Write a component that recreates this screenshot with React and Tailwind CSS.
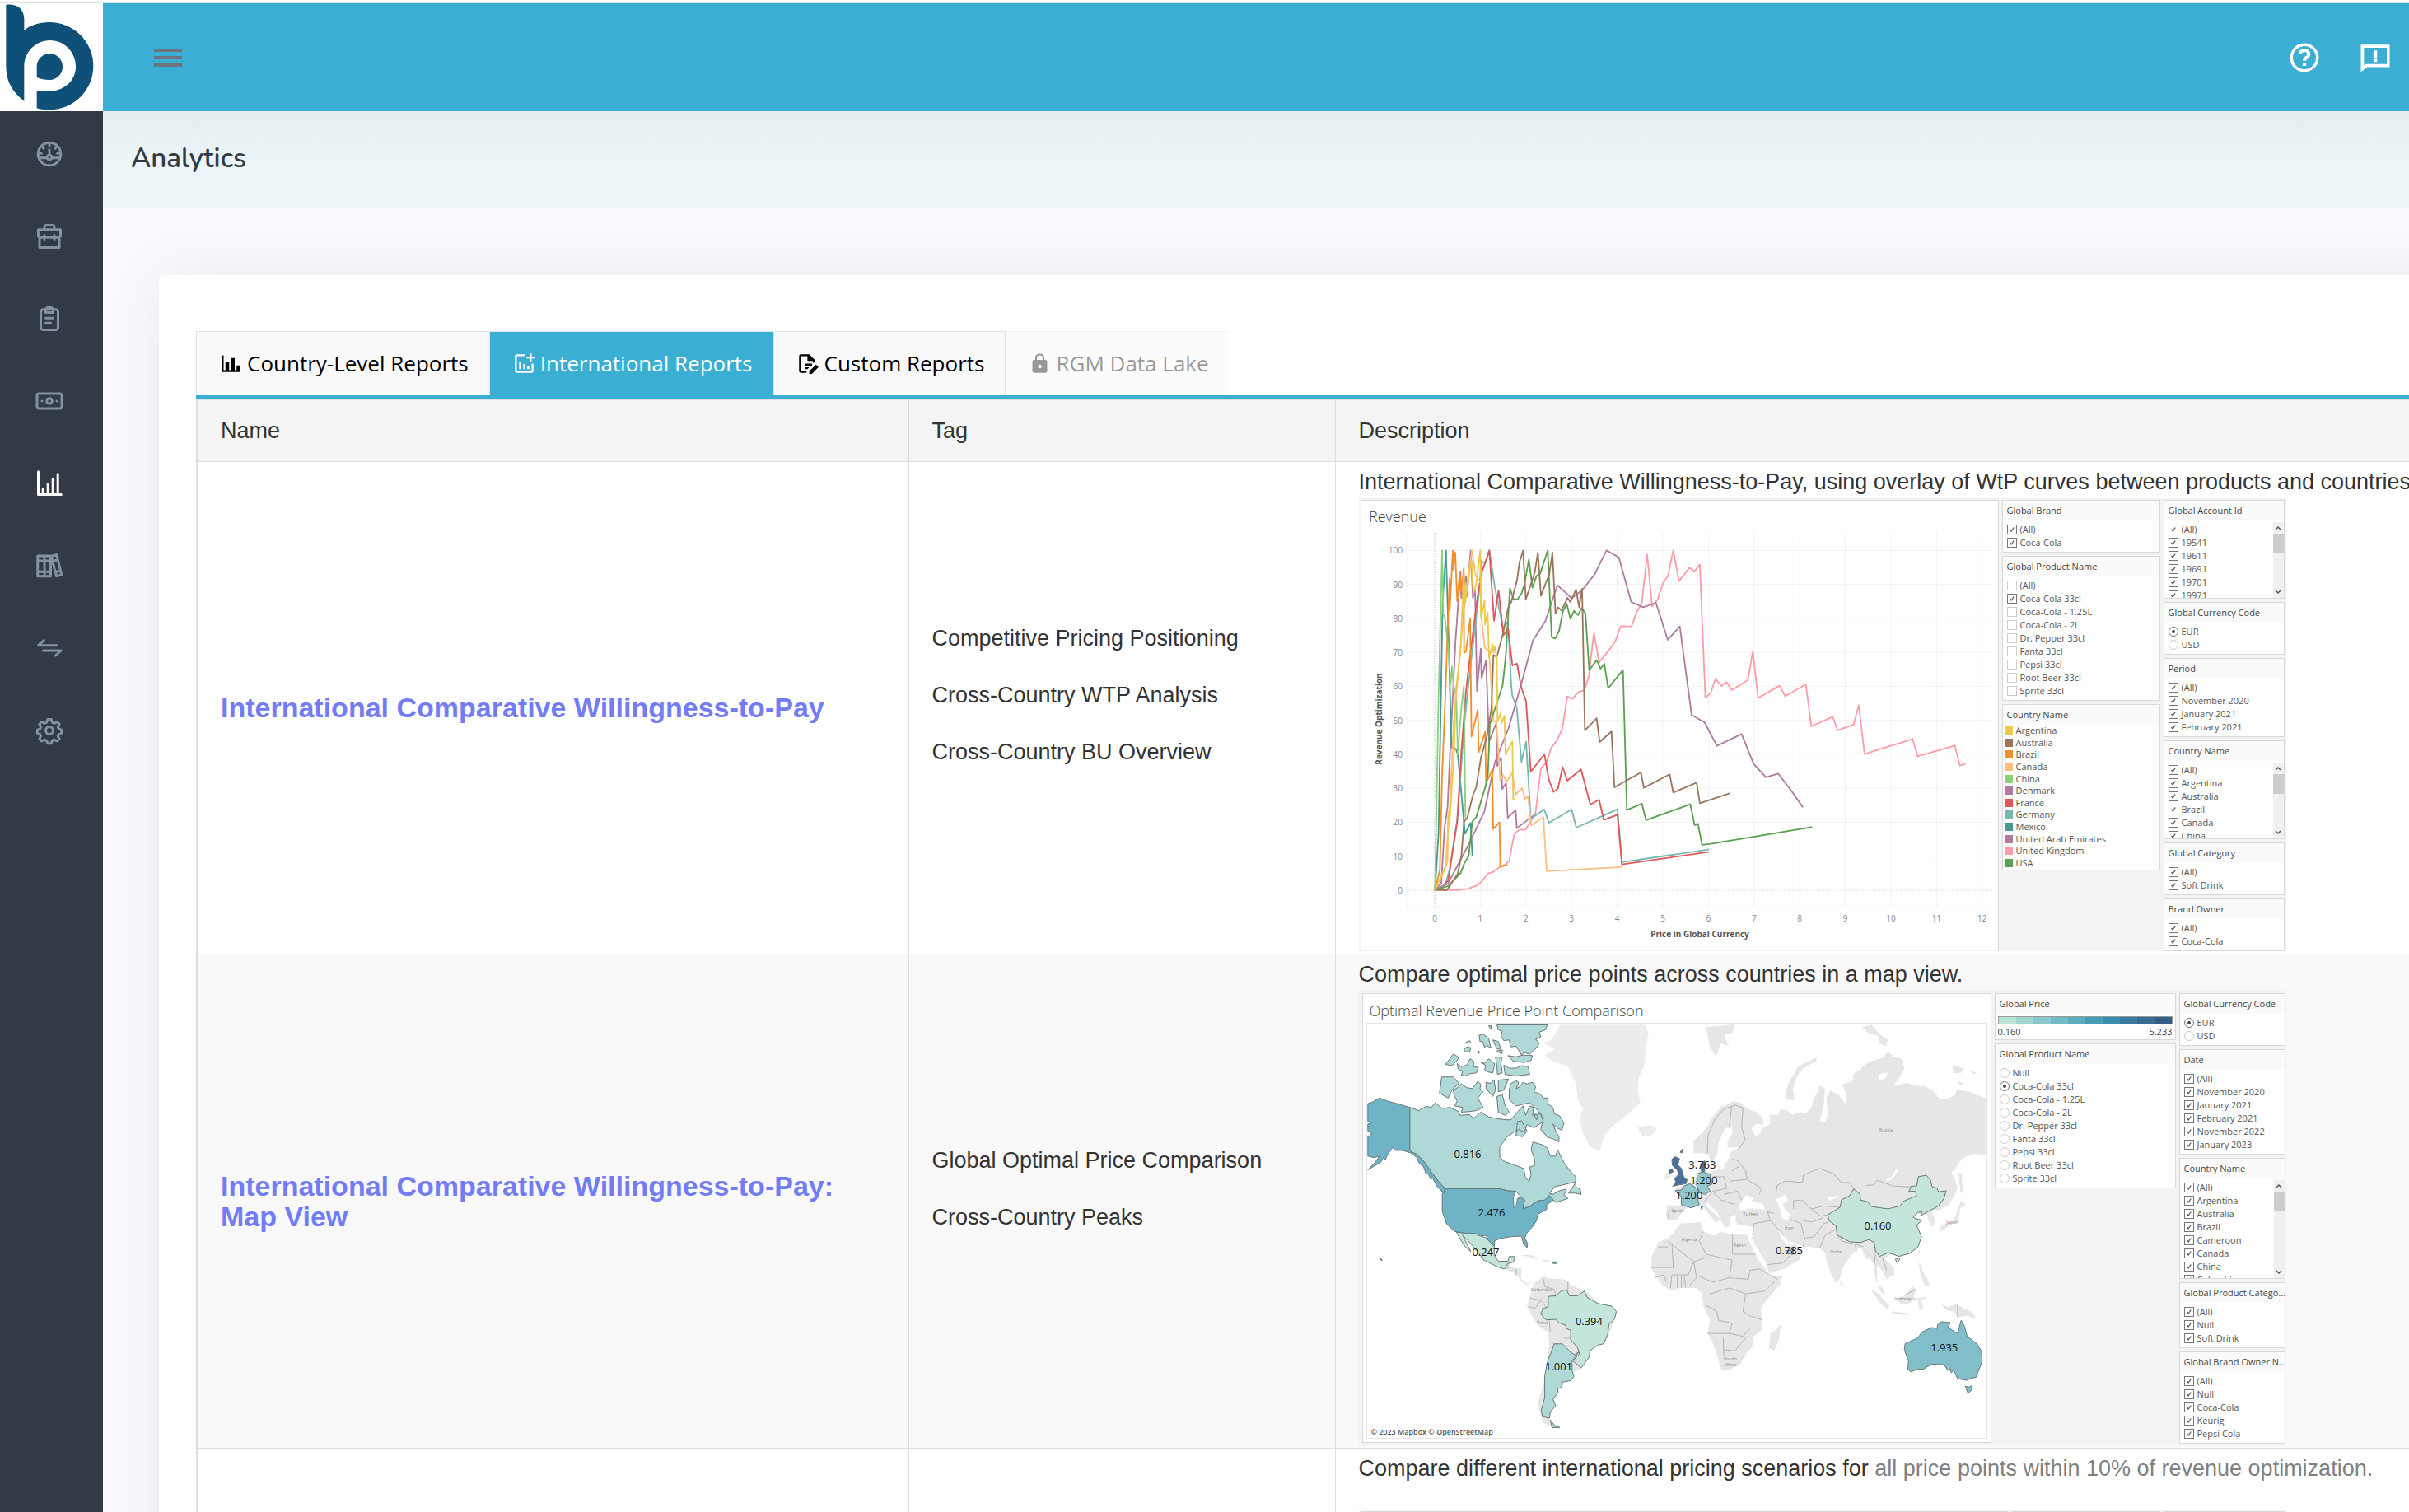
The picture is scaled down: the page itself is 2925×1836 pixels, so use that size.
import { useState } from 'react';

const NAV_ITEMS = [
  {
    label: 'Dashboard',
    icon: (
      <>
        <circle cx="12" cy="12" r="9.2" />
        <path d="M12 8.500V13M3.500 15.200h5.800M14.700 15.200h5.800M12 3.500v2M6.200 6.200l1.200 1.200M17.800 6.200l-1.200 1.200M3.500 11.500h2M18.500 11.500h2" />
        <circle cx="12" cy="14.8" r="1.9" />
      </>
    ),
  },
  {
    label: 'Portfolio',
    icon: (
      <>
        <path d="M8 6V4.500A1.500 1.500 0 0 1 9.500 3h5A1.500 1.500 0 0 1 16 4.500V6" />
        <path d="M3 6.500h18v5.500l-1 .9H4L3 12zM4 13v8h16v-8M8 11v4M16 11v4" />
      </>
    ),
  },
  {
    label: 'Plans',
    icon: (
      <>
        <rect x="5" y="4.500" width="14" height="16.500" rx="2" />
        <path d="M9 7V5c0-1.200 1-2.200 3-2.200s3 1 3 2.200v2zM9 11.500h6M9 15.500h4" />
      </>
    ),
  },
  {
    label: 'Pricing',
    icon: (
      <>
        <rect x="2" y="6" width="20" height="12" rx="1.500" />
        <circle cx="12" cy="12" r="2.200" />
        <path d="M6 12h.01M18 12h.01" />
      </>
    ),
  },
  {
    label: 'Analytics',
    icon: <path d="M3 2.500V21h18.500M6.800 20v-3.500M10.800 20v-7.500M14.800 20V8.500M18.800 20V4.500" />,
  },
  {
    label: 'Library',
    icon: (
      <path d="M2.500 4h5.500v16.500H2.500zM8 4h5v16.500H8zM2.500 8H13M2.500 16.800H13M13.500 4.200l4.200-1.100 4.200 16.200-4.200 1.100zM14.400 8.200l4.200-1.100M16.700 17.200l4.200-1.100" />
    ),
  },
  { label: 'Exchange', icon: <path d="M18 9.800H3l4.500-4M7 14h14.500L17 18" /> },
  {
    label: 'Settings',
    icon: (
      <>
        <circle cx="12" cy="12" r="3" />
        <path d="M12 3h1.500l.8 2.500 1.700.7 2.300-1.200 1.800 1.800-1.200 2.300.7 1.700 2.200.7v2.600l-2.200.8-.7 1.700 1.200 2.200-1.900 1.900-2.200-1.200-1.700.7-.8 2.300h-3l-.8-2.300-1.700-.7-2.200 1.200-1.900-1.900 1.200-2.200-.7-1.700-2.200-.8v-2.600l2.200-.7.7-1.700-1.200-2.300 1.800-1.800 2.300 1.200 1.700-.7.8-2.500z" />
      </>
    ),
  },
];

const TABS = [
  { label: 'Country-Level Reports', path: 'M22 21H2V3h2v16h2v-9h4v9h2V6h4v13h2v-5h4v7z' },
  {
    label: 'International Reports',
    path: 'M20 12h2v8a2 2 0 0 1-2 2H4a2 2 0 0 1-2-2V4a2 2 0 0 1 2-2h9v2H4v16h16zM6.500 10h2.300v8H6.500zM11 12.500h2.200V18H11zM15.200 14.500h2.300V18h-2.300zM18 1h2v3.500h3.500v2H20V10h-2V6.500h-3.500v-2H18z',
  },
  {
    label: 'Custom Reports',
    path: 'M8 12h8v2l-1 1H8zM2 20V4a2 2 0 0 1 2-2h9l6 6v2.500l-2 1V9h-6V4H4v16h6v2H4a2 2 0 0 1-2-2zM8 16h5l-2 2H8zM20.200 13l2.800 2.800-7.200 7.200H13v-2.800z',
  },
  {
    label: 'RGM Data Lake',
    disabled: true,
    path: 'M12 17a2 2 0 1 0 0-4 2 2 0 0 0 0 4zm6-9a2 2 0 0 1 2 2v10a2 2 0 0 1-2 2H6a2 2 0 0 1-2-2V10a2 2 0 0 1 2-2h1V6a5 5 0 0 1 10 0v2zm-6-5a3 3 0 0 0-3 3v2h6V6a3 3 0 0 0-3-3z',
  },
];

const LEGEND = [
  ['Argentina', '#edc948'],
  ['Australia', '#9c755f'],
  ['Brazil', '#f28e2b'],
  ['Canada', '#ffbe7d'],
  ['China', '#8cd17d'],
  ['Denmark', '#b07aa1'],
  ['France', '#e15759'],
  ['Germany', '#76b7b2'],
  ['Mexico', '#499894'],
  ['United Arab Emirates', '#b07aa1'],
  ['United Kingdom', '#ff9da7'],
  ['USA', '#59a14f'],
];

// plot units: 166 per price unit, 12.38 per revenue point
const SERIES = [
  ['#ff9da7', '45,1305 100,1305 140,1300 178,1287 195,1270 214,1245 235,1238 258,1220 275,1214 293,1198 303,1140 312,1098 330,1085 352,1084 388,1026 398,940 408,861 428,840 446,785 467,759 486,717 504,599 523,608 543,584 566,576 582,530 601,367 620,475 660,425 680,396 698,343 738,344 758,289 775,262 795,82 813,271 833,246 853,186 871,159 890,67 911,179 949,130 968,143 987,119 1007,603 1026,588 1044,534 1065,561 1084,547 1104,576 1162,539 1180,434 1199,605 1277,560 1298,598 1373,555 1393,708 1471,673 1489,723 1547,702 1566,631 1587,809 1762,754 1780,817 1916,778 1934,851 1953,846'],
  ['#b07aa1', '22,1305 45,1280 57,1075 68,1000 78,780 97,395 115,143 118,240 135,160 138,235 152,67 160,240 168,215 175,580 189,425 192,533 208,468 219,763 245,697 249,852 263,822 267,936 281,915 287,1041 316,1013 320,1079 388,1028'],
  ['#499894', '22,1305 35,1100 50,250 62,67 72,400 82,785 98,790 105,810 118,950 131,1100 152,1060 158,1178'],
  ['#76b7b2', '22,1305 60,1285 75,1230 103,1050 130,690 150,500 185,200 190,105 205,115 220,67 240,200 270,350 288,325 300,560 304,597 320,640 337,838 354,764 371,1045 420,1011 437,1059 520,1011 537,1077 687,1010 703,1203 1018,1157'],
  ['#e15759', '22,1305 50,1290 70,1270 103,1055 118,800 135,580 150,450 175,250 190,155 220,67 237,323 254,213 271,377 288,350 304,486 321,480 336,565 354,617 371,873 421,810 436,900 454,947 470,935 487,856 504,906 554,865 588,993 620,975 637,1049 687,1030 703,1211 1018,1166'],
  ['#b07aa1', '22,1305 70,1280 148,1132 202,1018 240,840 290,715 336,555 379,395 424,325 468,194 520,242 560,210 603,155 647,67 692,93 737,255 781,274 827,258 870,393 914,344 957,667 1004,693 1049,779 1139,736 1183,845 1228,894 1272,880 1316,937 1361,1001'],
  ['#8cd17d', '22,1305 35,600 48,67 52,300 58,310 70,415 79,557 84,490 92,590 99,565 105,810 118,640 127,562 133,1040'],
  ['#ffbe7d', '22,1305 60,1220 75,1020 90,700 110,480 130,250 157,67 170,160 188,185 190,300 203,420 219,435 235,690 246,693 260,905 270,885 282,910 304,878 316,957 339,933 350,972 361,963 373,1069 417,1039 429,1236 701,1221'],
  ['#f28e2b', '22,1305 40,1230 48,885 60,590 75,170 76,285 87,67 88,137 96,75 103,253 112,150 118,215 127,132 128,440 135,435 150,317 155,745 178,647 181,802 205,728 208,915 231,866 234,1082 257,1058 260,1220 284,1213'],
  ['#59a14f', '22,1305 70,1290 115,1243 130,1205 145,1180 158,1055 172,1040 208,920 215,880 222,700 250,615 268,562 280,450 295,205 308,245 323,245 337,225 348,190 364,100 377,203 392,160 405,152 433,67 447,382 460,388 474,360 488,290 502,262 515,316 529,288 543,303 556,278 570,295 584,503 611,467 625,498 639,480 653,569 707,503 721,1013 776,990 791,1050 952,992 968,1068 980,1063 995,1140 1023,1137 1394,1075'],
  ['#9c755f', '22,1305 65,1305 105,1245 118,1180 128,1055 140,1040 160,960 172,930 190,820 210,750 228,640 235,448 247,455 270,370 288,278 300,255 321,175 330,110 343,67 353,245 385,150 397,75 408,232 438,155 450,75 461,297 471,275 483,286 505,240 515,255 536,210 547,273 558,207 568,723 611,679 622,765 665,727 676,930 772,876 783,932 877,883 890,949 975,913 987,988 1095,952'],
  ['#edc948', '22,1305 50,1245 68,1200 70,1020 76,1050 92,800 98,580 115,430 127,150 132,260 150,130 155,105 162,225 172,190 187,67 190,312 203,248 204,337 214,294 219,457 232,410 235,440 240,418 247,455 250,690 261,660 264,698 275,670 279,810 304,763 307,975 314,970'],
];

const priceX = (p) => 89 + p * 55.4;
const revenueY = (v) => 473 - v * 4.127;

function RevenueChart() {
  const prices = [0, 1, 2, 3, 4, 5, 6, 7, 8, 9, 10, 11, 12];
  const revenues = [0, 10, 20, 30, 40, 50, 60, 70, 80, 90, 100];
  return (
    <svg viewBox="0 0 773 545" className="block w-[773px] h-[545px] font-['Open_Sans',sans-serif]" role="img" aria-label="Revenue by price">
      <text x="9" y="26" fontSize="18" fontWeight="300" fill="#444">Revenue</text>
      {prices.map((p) => (
        <g key={p}>
          <path d={`M${priceX(p)} 39V494`} stroke={p ? '#f2f2f2' : '#c8c8c8'} strokeDasharray={p ? undefined : '1 1'} />
          <text x={priceX(p)} y="511" fontSize="10" textAnchor="middle" fill="#888">{p}</text>
        </g>
      ))}
      {revenues.map((v) => (
        <g key={v}>
          <path d={`M55 ${revenueY(v)}H766`} stroke={v ? '#f2f2f2' : '#dcdcdc'} strokeDasharray={v ? undefined : '1 1'} />
          <text x="50" y={revenueY(v) + 4} fontSize="10" textAnchor="end" fill="#888">{v}</text>
        </g>
      ))}
      <path d="M55 39V494H766" fill="none" stroke="#f4f4f4" />
      <g transform="translate(82 38) scale(.3333)" fill="none" strokeWidth="5.500" strokeLinejoin="round" strokeLinecap="round">
        {SERIES.map(([color, points], i) => (
          <polyline key={i} points={points} stroke={color} />
        ))}
      </g>
      <text x="411" y="530" fontSize="10" fontWeight="700" textAnchor="middle" fill="#555">Price in Global Currency</text>
      <text transform="translate(25 265) rotate(-90)" fontSize="10" fontWeight="700" textAnchor="middle" fill="#555">Revenue Optimization</text>
    </svg>
  );
}

const MAP_VALUES = [
  [122, 160, '0.816'],
  [151, 231, '2.476'],
  [144, 279, '0.247'],
  [270, 363, '0.394'],
  [233, 419, '1.001'],
  [408, 173, '3.763'],
  [410, 192, '1.200'],
  [392, 210, '1.200'],
  [622, 247, '0.160'],
  [514, 277, '0.785'],
  [703, 396, '1.935'],
];

const MAP_LABELS = [
  [378, 228, 'Spain'],
  [392, 263, 'Algeria'],
  [454, 269, 'Egypt'],
  [212, 324, 'Colombia'],
  [213, 364, 'Peru'],
  [442, 409, 'South'],
  [442, 416, 'Africa'],
  [632, 130, 'Russia'],
  [467, 232, 'Turkey'],
  [514, 249, 'Iran'],
  [571, 278, 'India'],
  [713, 242, 'Japan'],
  [656, 335, 'Indonesia'],
];

function WorldMap() {
  return (
    <svg viewBox="0 0 754 505" className="block w-[754px] h-[505px] border border-[#e6e6e6] font-['Open_Sans',sans-serif]" role="img" aria-label="Optimal price by country">
      {/* eastern hemisphere */}
      <g transform="translate(441 -42) scale(.3333 .3571)" fill="#e6e6e6" strokeLinejoin="round">
        <path d="M-130 560L-132 520L-105 495L-80 470L-65 440L-50 425L-30 400L-10 395L10 383L35 385L70 410L100 420L122 440L125 465L100 460L80 475L95 500L110 495L120 475L150 460L148 430L180 430L185 410L210 412L230 430L255 420L280 422L300 405L310 370L325 350L330 330L350 340L345 400L330 450L350 455L360 430L355 370L370 345L400 360L430 395L425 350L412 325L450 315L455 288L480 275L490 260L520 245L560 235L580 212L600 230L635 240L640 275L620 305L600 330L650 320L680 330L715 330L750 350L770 378L800 375L828 358L830 342L880 350L900 360L937 370V565L890 562L850 580L825 615L812 625L825 650L835 680L820 710L800 740L765 755L740 755L755 795L738 812L728 785L722 768L700 765L670 775L705 785L685 800L703 845L680 890L620 912L590 905L570 920L600 950L605 972L575 990L560 960L540 945L542 1010L560 1020L572 1045L555 1035L535 990L528 940L515 920L500 920L480 880L460 895L440 915L415 950L402 992L390 1002L375 980L355 925L350 900L330 885L300 880L275 880L250 868L215 860L178 822L190 850L215 878L240 870L268 895L255 925L200 955L145 970L135 935L105 890L82 850L90 812L30 803L22 790L25 770L0 780L2 808L-15 815L-30 790L-42 765L-80 728L-85 740L-30 785L-42 788L-50 805L-55 790L-100 738L-130 745L-145 740L-165 752L-190 785L-215 788L-232 775L-228 737L-172 738L-178 700L-200 680L-160 668L-130 660L-112 625L-100 590L-88 588L-82 625L-50 618L-20 612L-12 570L-35 620L-52 612L-78 565L-100 560Z" />
        <path fill="#fff" d="M-62 588L-45 565L-38 520L-15 475L8 470L12 490L-5 520L-8 540L38 540L5 556L-5 585L-35 612L-50 612Z" />
        <path fill="#fff" d="M35 738L60 703L90 712L80 722L125 735L130 752L80 748L40 755ZM172 718L205 702L215 720L195 735L205 755L222 768L215 788L190 782L185 750ZM358 712L398 704L395 710L365 722ZM572 652L595 640L612 610L615 620L600 645L580 656ZM545 290L580 285L570 305L550 310Z" />
        <path d="M-220 848L-180 800L-105 795L-95 827L-50 843L-35 827L10 838L65 838L78 870L100 915L135 960L145 978L195 980L185 1010L130 1068L115 1090L122 1160L85 1190L85 1220L65 1240L40 1280L0 1300L-28 1303L-45 1250L-62 1205L-80 1175L-70 1130L-95 1080L-100 1040L-120 1020L-140 1020L-180 1020L-215 1030L-250 1005L-285 955L-285 915L-260 865Z" />
        <path d="M190 1140L180 1200L165 1232L145 1225L150 1175L175 1160ZM515 1022L545 1040L585 1080L582 1095L555 1075ZM590 1100L650 1105L660 1113L600 1108ZM610 1055L645 1045L670 1015L685 1025L665 1070L630 1078ZM690 1055L725 1050L700 1065L710 1090L695 1092ZM775 1075L800 1085L830 1075L870 1095L885 1100L905 1125L870 1115L835 1120L820 1100L790 1095ZM692 935L702 940L705 960L725 990L732 1010L715 1015L700 975ZM848 722L865 735L845 748L842 770L835 792L800 810L765 832L775 808L820 790L835 755ZM838 625L850 630L855 700L845 690ZM404 992L415 1008L408 1016ZM205 360L215 325L250 265L320 232L318 245L270 270L240 310L232 345L240 380L210 375ZM485 130L520 122L545 150L582 172L572 195L548 185L545 160L510 150ZM815 258L860 270L850 285L820 288ZM875 275L905 285L895 290ZM835 315L855 320L845 328ZM690 895L697 890L695 910ZM-85 130L-30 125L20 120L10 150L-20 155L-2 195L-30 185L-48 230L-70 200Z" />
        <g fill="none" stroke="#b4b4b4" strokeWidth="1">
          <path vectorEffect="non-scaling-stroke" d="M-80 560L-78 500L-50 440L-20 410L20 395L50 405L45 470L58 515L30 550M0 475L8 400M10 580L30 585L60 620L65 650L118 680L110 700M10 620L35 605M0 655L60 650M-20 700L30 690L45 720M-62 640L-20 640L-10 680L-60 690L-30 720L20 735M-60 690L-90 725M170 700L175 670L205 655L268 660L270 635L330 612L380 630L410 660L440 660L457 682M235 750V722L265 720L300 750L345 740L405 745M300 750L335 775L360 770M270 790L300 795L345 780M225 785L262 800L275 850L270 880M275 850L310 845L345 800L365 795M330 885L350 840L390 820M500 670L530 668L540 652L600 672L665 675M395 845L410 860L460 870M465 895L460 870L490 880M535 905L530 940M560 915L575 960M85 840L90 800L150 790L200 840M150 790L140 760L165 765M140 940L195 935L220 910M215 880L235 890M-225 860L-130 930L-80 915M-260 880H-225M-205 950L-210 870M-285 950H-205M-95 827L-110 860L-85 905L10 925M12 838V905H97M-130 930L-150 975L-210 975L-215 1020M-130 930L-120 985L-145 1010M10 925L0 985L-60 1000L-110 980M0 985L70 990L75 960L110 955L175 990L130 1030L60 1040L0 1020L-70 1040M60 1040L50 1100L75 1115L122 1130M-80 1175L0 1175L10 1140L-40 1130L-45 1100L-85 1080M0 1175L50 1185L75 1160M-20 1250L-22 1190M-20 1230L20 1235L60 1190M-275 985L-240 975L-230 1000M-190 980V1020M-175 980V1020M-165 975L-160 1018M835 1075V1120M640 1045L680 1025" />
        </g>
        <g stroke="#6b7778" strokeWidth="1">
          <path vectorEffect="non-scaling-stroke" fill="#c3e5db" d="M360 770L405 745L410 720L440 705L455 682L478 700L480 720L505 725L520 742L580 750L625 740L635 725L685 705L680 690L657 690L665 672L685 672L692 640L720 635L735 650L742 675L760 680L765 692L793 688L785 715L765 740L735 755L700 773L705 760L690 762L672 778L685 785L705 788L685 805L703 845L690 880L660 902L620 912L600 905L580 900L550 912L535 895L530 865L510 855L480 865L440 862L395 840L390 808L365 790ZM607 922L618 918L624 922L614 934Z" />
          <path vectorEffect="non-scaling-stroke" fill="#82bfc9" d="M643 1210L690 1190L705 1170L740 1155L760 1158L762 1145L775 1135L808 1138L800 1155L835 1175L848 1130L860 1150L870 1185L905 1210L922 1235L925 1270L902 1325L885 1328L870 1335L835 1330L820 1300L812 1310L808 1295L800 1302L785 1282L740 1280L710 1297L685 1298L665 1307L653 1298L655 1270L640 1230ZM863 1355L875 1358L889 1353L885 1370L873 1380Z" />
          <path vectorEffect="non-scaling-stroke" fill="#aed9d6" d="M205 893L225 892L235 882L232 905L212 903Z" />
        </g>
      </g>
      {/* western hemisphere and western Europe */}
      <g transform="translate(-19 -72) scale(.3333 .3827)" fill="#e6e6e6" strokeLinejoin="round">
        <path fill="#ececec" d="M700 250L730 240L760 192H1072L1085 220L1075 260L1070 320L1050 360L1045 400L1055 440L1010 475L960 510L925 540L905 595L870 580L845 540L832 490L845 460L825 430L820 380L790 325L740 310L705 290L740 270ZM1045 520L1065 515L1095 512L1115 525L1090 548L1060 545ZM1145 665L1165 660L1168 680L1145 685Z" />
        <path d="M557 970L575 952L585 965L620 968L618 1000L640 1015L665 1010L640 1020L620 1010L600 985ZM615 925L660 925L685 940L650 932ZM690 940L725 942L710 950ZM665 1015L700 992L720 1000L780 1003L800 1020L855 1040L905 1080L965 1100L960 1130L935 1190L870 1230L840 1285L810 1300L770 1330L740 1370L735 1410L720 1445L735 1475L700 1460L678 1400L700 1340L715 1270L722 1200L715 1170L680 1150L640 1090L650 1060Z" />
        <path vectorEffect="non-scaling-stroke" fill="none" stroke="#b4b4b4" d="M700 1000L705 1025L740 1035L745 1055M790 1010V1040M650 1062L690 1070L710 1090M645 1090L670 1095L690 1070M722 1135L725 1170M722 1200L740 1208M775 1190L800 1190M570 952V970M600 970V990M1160 780L1155 812" />
        <g stroke="#6b7778" strokeWidth="1">
          <path vectorEffect="non-scaling-stroke" fill="#6fb4c6" d="M58 443L75 438L100 425L130 435L165 443L212 455V594L235 603L262 625L290 660L325 700L343 716L335 728L310 705L295 680L288 684L280 668L270 665L262 645L245 632L238 615L215 600L185 592L160 592L150 582L130 605L122 622L115 615L105 630L85 640L58 654L85 630L100 610L80 615L58 610V545L70 548V535L58 530V508L70 505L58 500ZM343 714H540L570 720L600 722L590 740L592 775L602 765L605 745L618 740L632 750L625 778L650 770L680 752L705 750L722 730L735 732L735 752L712 765L712 780L680 795L675 815L665 830L640 855L632 870L643 890L640 902L628 890L620 865L580 867L545 872L522 880L520 900L500 880L490 862L470 865L450 857L420 857L375 850L345 825L330 785V730ZM735 947h14v5h-14zM100 936L108 938L110 944Z" />
          <path vectorEffect="non-scaling-stroke" fill="#aed9d6" d="M212 455L245 465L255 458L275 452L290 455L305 440L320 452L330 458L360 455L390 468L395 480L430 478L445 490L455 482L470 470L500 485L540 492L580 495L605 470L625 450L635 480L650 450L665 455L660 480L690 475L700 500L665 520L640 510L630 535L610 525L590 535L565 550L540 582L541 615L560 628L600 640L628 650L635 680L648 690L655 670L650 645L668 640L668 620L655 590L662 565L700 575L715 585L725 610L745 610L752 590L775 630L800 660L818 675V692L770 702L740 708L722 730L735 732L760 720L785 715L775 735L790 745L745 758L722 735L705 750L680 752L650 770L625 778L632 750L618 740L600 722L570 720L540 714H343L325 700L290 660L262 625L235 603L212 594ZM792 728L818 695L820 710L835 715L838 732L815 728ZM575 400L580 380L600 370L610 375L600 395L612 390L625 375L640 380L660 375L672 390L665 405L688 412L700 425L715 425L718 445L735 455L740 475L760 482L775 505L768 528L750 520L735 508L745 530L757 548V565L735 555L715 550L690 525L700 490L680 465L650 440L600 450L575 430ZM370 400L385 392L400 380L420 392L440 395L460 372L472 382L468 395L480 405L460 425L470 440L480 455L455 465L430 468L400 470L405 455L375 450L385 435L375 420ZM328 358L370 358L392 378L365 400L352 425L320 410ZM490 375L505 378L520 368L525 400L515 420L490 395ZM535 368L572 365L555 400L535 405ZM530 420L550 415L560 450L575 470L560 480L535 470ZM530 192H714L708 208L685 215L690 230L672 238L685 250L675 265L650 285L630 280L620 288L600 260L580 262L575 240L555 242L545 228L550 212L535 208ZM555 320L575 330L600 330L620 322L645 325L650 350L625 352L600 355L560 350ZM570 290L600 294L625 288L660 290L655 305L630 312L590 308ZM465 225L480 222L500 235L508 265L492 258L485 264L478 245L468 245ZM385 315L400 325L420 320L432 300L445 308L445 325L462 328L455 345L430 348L415 355L400 352L405 340L388 332ZM342 318L358 300L370 285L385 292L390 300L378 312L365 322ZM470 310L485 315L500 300L522 315L515 345L498 342L485 335L490 322ZM525 295L548 295L545 315L550 345L532 350L530 325ZM410 270L420 262L435 265L430 278L412 278ZM412 250L430 242L436 250ZM515 240L535 245L545 270L530 268ZM530 275L550 272L548 284ZM500 195L510 195L508 207ZM460 275L468 278L462 285ZM665 475L680 480L675 495ZM605 500L620 498L640 530L625 548L600 545Z" />
          <path vectorEffect="non-scaling-stroke" fill="#aed9d6" d="M740 1208L770 1208L800 1235L815 1243L832 1232L805 1262L805 1295L812 1312L800 1325L770 1330L768 1345L752 1352L755 1362L735 1385L745 1405L725 1425L722 1445L697 1440L692 1420L705 1380L705 1310L715 1265ZM725 1450L745 1472L760 1474L732 1475Z" />
          <path vectorEffect="non-scaling-stroke" fill="#c3e5db" d="M382 852L420 857L450 857L470 865L490 870L520 898L520 925L535 945L570 945L575 930L597 930L590 948L570 952L557 970L530 962L480 940L460 915L435 890L405 862L415 880L435 915L410 895L390 865ZM718 1057L745 1055L765 1040L785 1035L795 1055L825 1055L850 1040L860 1060L900 1080L950 1088L967 1105L960 1130L940 1145L935 1180L920 1208L900 1212L870 1230L868 1250L838 1285L808 1262L832 1240L825 1220L800 1195V1165L785 1160L780 1148L755 1140L745 1130L710 1132L690 1112L700 1095L718 1090Z" />
          <path vectorEffect="non-scaling-stroke" fill="#4a719b" d="M1172 706L1185 695L1180 682L1195 668L1190 655L1172 640L1170 620L1182 612L1198 618L1192 638L1205 650L1215 680L1226 685L1222 698L1195 702ZM1158 657L1170 650L1175 660L1162 665ZM1200 598L1208 588V600ZM1275 635L1290 625V660L1278 658Z" />
          <path vectorEffect="non-scaling-stroke" fill="#92c9cf" d="M1182 720L1205 718L1215 705L1235 698L1270 718L1262 740L1270 765L1240 775L1205 765V740ZM1262 668L1280 660L1310 668L1316 700L1300 705L1310 722L1290 732L1268 725L1260 700ZM1276 770H1282L1280 783Z" />
        </g>
      </g>
      {MAP_LABELS.map(([x, y, name]) => (
        <text key={name} x={x} y={y + 2} fontSize="6" textAnchor="middle" fill="#8a8a8a">{name}</text>
      ))}
      {MAP_VALUES.map(([x, y, value]) => (
        <text key={`${x}-${y}`} x={x} y={y + 4} fontSize="13" textAnchor="middle" fill="#111">{value}</text>
      ))}
      <text x="4" y="501" fontSize="9" fontWeight="600" fill="#555">© 2023 Mapbox © OpenStreetMap</text>
    </svg>
  );
}

function Option({ type, group, label, checked }) {
  return (
    <label className="relative flex h-4 shrink-0 items-center gap-1 whitespace-nowrap text-[11px] leading-4 text-[#555]">
      <input
        type={type}
        name={group}
        defaultChecked={checked}
        className={`peer m-0 size-3 appearance-none border border-[#ccc] bg-white checked:border-[#777] ${type === 'radio' ? 'rounded-full' : ''}`}
      />
      {type === 'radio' ? (
        <span className="pointer-events-none absolute left-1 hidden size-1 rounded-full bg-[#444] peer-checked:block" />
      ) : (
        <svg viewBox="0 0 12 12" className="pointer-events-none absolute left-0 hidden size-3 peer-checked:block">
          <path d="M3.500 6l1.700 2 3-4.500" fill="none" stroke="#555" strokeWidth="1.300" />
        </svg>
      )}
      <span>{label}</span>
    </label>
  );
}

function Panel({ title, children }) {
  return (
    <section className="shrink-0 border border-[#d9d9d9] bg-white">
      <h3 className="h-6 bg-[#fafafa] pl-[5px] text-[11px] leading-6 whitespace-nowrap text-[#444]">{title}</h3>
      {children}
    </section>
  );
}

function FilterPanel({ id, title, options, type = 'checkbox', selected, scroll }) {
  const list = (
    <div className={`flex flex-1 flex-col px-[5px] py-[3px] ${scroll || ''}`}>
      {options.map((option) => (
        <Option
          key={option}
          type={type}
          group={id}
          label={option}
          checked={selected ? selected === option : true}
        />
      ))}
    </div>
  );
  return (
    <Panel title={title}>
      {scroll ? (
        <div className="flex">
          {list}
          <div className="mt-[2px] flex w-[13px] flex-col items-center bg-[#f0f0f0]">
            <svg viewBox="0 0 12 14" className="h-[14px] w-3"><path d="M3 9l3-3 3 3" fill="none" stroke="#555" strokeWidth="1.500" /></svg>
            <div className="h-6 w-full bg-[#cdcdcd]" />
            <svg viewBox="0 0 12 14" className="mt-auto h-[14px] w-3"><path d="M3 5l3 3 3-3" fill="none" stroke="#555" strokeWidth="1.500" /></svg>
          </div>
        </div>
      ) : (
        list
      )}
    </Panel>
  );
}

const PRODUCTS = ['Coca-Cola 33cl', 'Coca-Cola - 1.25L', 'Coca-Cola - 2L', 'Dr. Pepper 33cl', 'Fanta 33cl', 'Pepsi 33cl', 'Root Beer 33cl', 'Sprite 33cl'];

const SCALE = ['bg-[#bce4d8]', 'bg-[#a3d6d1]', 'bg-[#8bc8cd]', 'bg-[#72bac6]', 'bg-[#5aacbe]', 'bg-[#459eb6]', 'bg-[#3a8dac]', 'bg-[#397da0]', 'bg-[#386c95]', 'bg-[#345d88]'];

function RevenueDashboard() {
  return (
    <div className="flex h-[550px] w-[1126px] gap-1 overflow-hidden bg-[#f3f3f3] p-[2px] font-['Open_Sans',sans-serif]">
      <div className="w-[775px] shrink-0 self-start border border-[#d9d9d9] bg-white">
        <RevenueChart />
      </div>
      <div className="flex w-[192px] shrink-0 flex-col gap-1">
        <FilterPanel id="brand" title="Global Brand" options={['(All)', 'Coca-Cola']} />
        <FilterPanel id="product" title="Global Product Name" options={['(All)', ...PRODUCTS]} selected="Coca-Cola 33cl" />
        <Panel title="Country Name">
          <ul className="flex h-[176px] flex-col justify-between px-[2px] pb-px">
            {LEGEND.map(([name, color]) => (
              <li key={name} className="flex items-center gap-1 text-[11px] leading-[14px] text-[#555]">
                <span className="size-[10px]" style={{ backgroundColor: color }} />
                {name}
              </li>
            ))}
          </ul>
        </Panel>
      </div>
      <div className="flex w-[147px] shrink-0 flex-col gap-1">
        <FilterPanel id="account" title="Global Account Id" options={['(All)', '19541', '19611', '19691', '19701', '19971']} scroll="h-[94px] overflow-hidden" />
        <FilterPanel id="currency" title="Global Currency Code" type="radio" options={['EUR', 'USD']} selected="EUR" />
        <FilterPanel id="period" title="Period" options={['(All)', 'November 2020', 'January 2021', 'February 2021']} />
        <FilterPanel id="country" title="Country Name" options={['(All)', 'Argentina', 'Australia', 'Brazil', 'Canada', 'China']} scroll="h-[94px] overflow-hidden" />
        <FilterPanel id="category" title="Global Category" options={['(All)', 'Soft Drink']} />
        <FilterPanel id="owner" title="Brand Owner" options={['(All)', 'Coca-Cola']} />
      </div>
    </div>
  );
}

function MapDashboard() {
  return (
    <div className="flex h-[552px] w-[1126px] gap-1 overflow-hidden bg-[#f3f3f3] py-[3px] pl-1 font-['Open_Sans',sans-serif]">
      <div className="w-[764px] shrink-0 border border-[#d9d9d9] bg-white px-1">
        <h3 className="h-[35px] px-1 text-[18px] leading-10 font-light text-[#444]">Optimal Revenue Price Point Comparison</h3>
        <WorldMap />
      </div>
      <div className="flex w-[220px] shrink-0 flex-col gap-1">
        <Panel title="Global Price">
          <div className="px-[3px] pt-[3px]">
            <div className="flex h-[10px] border border-[#999]">
              {SCALE.map((shade) => (
                <span key={shade} className={`flex-1 ${shade}`} />
              ))}
            </div>
            <div className="flex h-[18px] justify-between text-[11px] leading-[18px] text-[#444]">
              <span>0.160</span>
              <span>5.233</span>
            </div>
          </div>
        </Panel>
        <FilterPanel id="map-product" title="Global Product Name" type="radio" options={['Null', ...PRODUCTS]} selected="Coca-Cola 33cl" />
      </div>
      <div className="flex w-[129px] shrink-0 flex-col gap-1">
        <FilterPanel id="map-currency" title="Global Currency Code" type="radio" options={['EUR', 'USD']} selected="EUR" />
        <FilterPanel id="map-date" title="Date" options={['(All)', 'November 2020', 'January 2021', 'February 2021', 'November 2022', 'January 2023']} />
        <FilterPanel id="map-country" title="Country Name" options={['(All)', 'Argentina', 'Australia', 'Brazil', 'Cameroon', 'Canada', 'China', 'Colombia']} scroll="h-[121px] overflow-hidden" />
        <FilterPanel id="map-category" title="Global Product Catego..." options={['(All)', 'Null', 'Soft Drink']} />
        <FilterPanel id="map-owner" title="Global Brand Owner N..." options={['(All)', 'Null', 'Coca-Cola', 'Keurig', 'Pepsi Cola']} />
      </div>
    </div>
  );
}

function ScenarioDashboard() {
  return (
    <div className="mt-[34px] flex h-[550px] w-[1126px] gap-1 bg-[#f3f3f3] p-[2px]">
      <div className="flex-1 border border-[#d9d9d9] bg-white" />
      <div className="w-[181px] border border-[#d9d9d9] bg-white" />
      <div className="w-[147px] border border-[#d9d9d9] bg-white" />
    </div>
  );
}

const REPORTS = [
  {
    name: 'International Comparative Willingness-to-Pay',
    tags: ['Competitive Pricing Positioning', 'Cross-Country WTP Analysis', 'Cross-Country BU Overview'],
    description: 'International Comparative Willingness-to-Pay, using overlay of WtP curves between products and countries',
    dashboard: <RevenueDashboard />,
  },
  {
    name: 'International Comparative Willingness-to-Pay: Map View',
    tags: ['Global Optimal Price Comparison', 'Cross-Country Peaks'],
    description: 'Compare optimal price points across countries in a map view.',
    dashboard: <MapDashboard />,
  },
  {
    name: '',
    tags: [],
    description: (
      <>
        Compare different international pricing scenarios for{' '}
        <span className="text-[#808080]">all price points within 10% of revenue optimization.</span>
      </>
    ),
    dashboard: <ScenarioDashboard />,
  },
];

function Logo() {
  return (
    <svg viewBox="0 12 375 393" className="block h-[131px] w-[125px] bg-white" role="img" aria-label="Logo" fill="#0e5077">
      <path d="M22 17C60 12 88 30 88 70V110C112 92 142 81 180 81A160 159.500 0 0 1 180 400Q150 400 134 394V330Q160 333 185 332C240 328 276 290 276 243C276 190 235 147 182 147C130 147 88 190 88 243V368C48 338 22 300 22 240Z" />
      <path d="M134 282V243A47 48 0 1 1 181 291Q155 291 134 282Z" />
    </svg>
  );
}

export default function App() {
  const [tab, setTab] = useState('International Reports');

  return (
    <div className="flex h-screen flex-col overflow-hidden bg-[#fafbfe] font-['Liberation_Sans',Arial,sans-serif]">
      <div className="h-1 shrink-0 border-b-2 border-[#e0e0e0] bg-white" />
      <div className="flex min-h-0 flex-1">
        <aside className="w-[125px] shrink-0 bg-[#323a46]">
          <a href="#home"><Logo /></a>
          <nav className="flex flex-col pt-[2px] pr-[5px]">
            {NAV_ITEMS.map((item) => (
              <a
                key={item.label}
                href={`#${item.label.toLowerCase()}`}
                aria-label={item.label}
                className={`flex h-[100px] items-center justify-center ${item.label === 'Analytics' ? 'text-white' : 'text-[#8391a2]'}`}
              >
                <svg viewBox="0 0 24 24" className="size-9" fill="none" stroke="currentColor" strokeWidth="2" strokeLinecap="round" strokeLinejoin="round">
                  {item.icon}
                </svg>
              </a>
            ))}
          </nav>
        </aside>

        <div className="min-w-0 flex-1">
          <header className="flex h-[131px] items-center justify-between bg-[#3aafd3] pr-5 pl-[62px]">
            <button type="button" aria-label="Toggle menu" className="flex flex-col gap-[5px]">
              <span className="h-1 w-[34px] bg-[#6c757d]" />
              <span className="h-1 w-[34px] bg-[#6c757d]" />
              <span className="h-1 w-[34px] bg-[#6c757d]" />
            </button>
            <div className="flex gap-11 text-white">
              <button type="button" aria-label="Help">
                <svg viewBox="0 0 24 24" className="size-[42px]" fill="none" stroke="currentColor" strokeWidth="2">
                  <circle cx="12" cy="12" r="9" />
                  <path d="M9 9.700a3 2.700 0 1 1 4.500 2.200c-1 .6-1.500 1-1.500 2.300M12 15.500v2.200" strokeWidth="2.400" />
                </svg>
              </button>
              <button type="button" aria-label="Feedback">
                <svg viewBox="0 0 24 24" className="size-[42px]" fill="currentColor">
                  <path d="M22 3H2v19l4.300-3.400H22zM20 16.400H5.500L4.200 17.500V5.200H20zM10.800 7h2.500v5h-2.500zM10.800 12.800h2.500v2.200h-2.500z" fillRule="evenodd" />
                </svg>
              </button>
            </div>
          </header>

          <div className="flex h-[117px] items-center bg-linear-to-b from-[#e6eef1] to-[#ecf5f8] to-60% pb-[2px] pl-[34px]">
            <h1 className="font-['Nunito',Lato,sans-serif] text-[33px] leading-10 font-semibold text-[#323a46]">Analytics</h1>
          </div>

          <main className="pt-[82px] pl-[68px]">
            <div className="w-max min-w-full rounded-md bg-white p-[45px] pt-[68px] shadow-[0_0_70px_rgba(154,161,171,0.2)]">
              <div role="tablist" className="flex border-b-[5px] border-[#3aafd3] font-['Segoe_UI','Open_Sans',sans-serif] text-[26px]">
                {TABS.map((item, i) => (
                  <button
                    key={item.label}
                    type="button"
                    role="tab"
                    aria-selected={tab === item.label}
                    disabled={item.disabled}
                    onClick={() => setTab(item.label)}
                    className={`flex h-[78px] items-center gap-[6px] border-t border-r border-[#dee2e6] pr-[25px] pl-7 ${i === 0 ? 'border-l' : ''} ${
                      tab === item.label ? 'border-[#3aafd3] bg-[#3aafd3] text-white' : 'bg-[#f9f9f9] text-black'
                    } disabled:opacity-40`}
                  >
                    <svg viewBox="0 0 24 24" className="size-[27px]" fill="currentColor" fillRule="evenodd">
                      <path d={item.path} />
                    </svg>
                    {item.label}
                  </button>
                ))}
              </div>

              <table className="w-full border-l-2 border-[#dedede] text-[27px] leading-8 text-[#333]">
                <thead>
                  <tr className="h-[75px] border-y border-[#dedede] bg-[#f4f4f4] text-left">
                    <th className="w-[864px] border-r border-[#dedede] px-7 font-normal">Name</th>
                    <th className="w-[518px] border-r border-[#dedede] px-7 font-normal">Tag</th>
                    <th className="px-7 font-normal">Description</th>
                  </tr>
                </thead>
                <tbody>
                  {REPORTS.map((report, i) => (
                    <tr key={i} className="border-b border-[#dedede] even:bg-[#f9f9f9]">
                      <td className="w-[864px] border-r border-[#dedede] px-7">
                        <a href={`#report-${i + 1}`} className="block w-[760px] text-[34px] leading-[37px] font-bold text-[#727cf5]">{report.name}</a>
                      </td>
                      <td className="w-[518px] border-r border-[#dedede] px-7">
                        {report.tags.map((tag) => (
                          <p key={tag} className="mb-[30px] leading-[39px]">{tag}</p>
                        ))}
                      </td>
                      <td className="px-7 pt-2 pb-[3px] align-top whitespace-nowrap">
                        <p className="mb-1">{report.description}</p>
                        {report.dashboard}
                      </td>
                    </tr>
                  ))}
                </tbody>
              </table>
            </div>
          </main>
        </div>
      </div>
    </div>
  );
}
